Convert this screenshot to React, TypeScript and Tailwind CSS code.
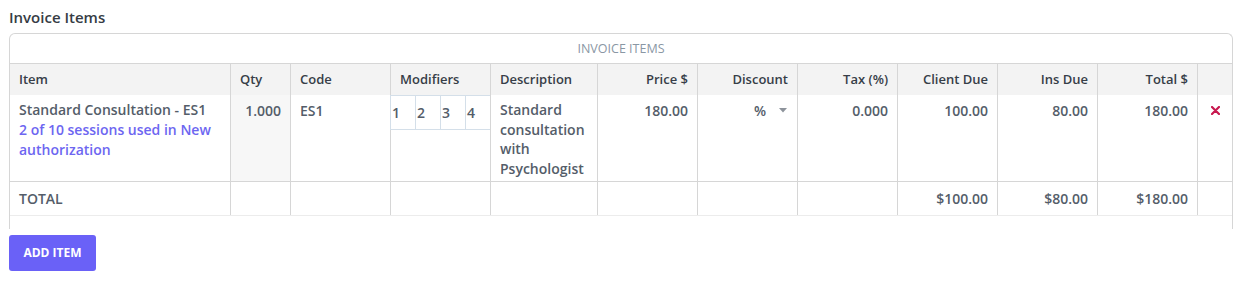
const cols =
  "grid grid-cols-[220px_60px_100px_100px_107px_100px_100px_100px_100px_100px_100px_1fr]";

const headers = [
  { label: "Item", align: "text-left" },
  { label: "Qty", align: "text-left" },
  { label: "Code", align: "text-left" },
  { label: "Modifiers", align: "text-left" },
  { label: "Description", align: "text-left" },
  { label: "Price $", align: "text-right" },
  { label: "Discount", align: "text-right" },
  { label: "Tax (%)", align: "text-right" },
  { label: "Client Due", align: "text-right" },
  { label: "Ins Due", align: "text-right" },
  { label: "Total $", align: "text-right" },
  { label: "", align: "text-left" },
];

function Caret() {
  return (
    <svg width="8" height="5" viewBox="0 0 8 5" className="ml-[13px]">
      <path d="M0 0 L8 0 L4 4.5 Z" fill="#8d939b" />
    </svg>
  );
}

function RemoveIcon() {
  return (
    <svg width="9" height="9" viewBox="0 0 9 9">
      <path d="M1 1 L8 8 M8 1 L1 8" stroke="#c8184f" strokeWidth="2.2" strokeLinecap="round" />
    </svg>
  );
}

export default function App() {
  return (
    <div className="w-[1248px] h-[291px] bg-white pl-[9px] pr-[15px] pt-[7px] font-['Open_Sans',sans-serif] text-[14px] leading-[19.5px] font-semibold text-[#545d69]">
      <h2 className="text-[15px] leading-[20px] font-semibold text-[#363c44]">Invoice Items</h2>

      <div className="mt-[6px] rounded-t-[6px] border-x border-t border-[#d6d6d6]">
        <div className="h-[30px] flex items-center justify-center text-[12.5px] font-normal uppercase text-[#8a97a4] border-b border-[#d6d6d6]">
          Invoice Items
        </div>

        <div className={`${cols} bg-[#f3f3f3] text-[13px] text-[#373e48]`}>
          {headers.map((h, i) => (
            <div
              key={i}
              className={`h-[31px] px-[9px] pt-[6px] ${h.align} ${i > 0 ? "border-l border-[#d6d6d6]" : ""}`}
            >
              {h.label}
            </div>
          ))}
        </div>

        <div className={`${cols} h-[86px]`}>
          <div className="px-[9px] pt-[5px] leading-[20px]">
            <div>Standard Consultation - ES1</div>
            <div className="text-[#6d66f1]">2 of 10 sessions used in New authorization</div>
          </div>
          <div className="border-l border-[#d6d6d6] bg-[#f7f7f7] px-[9px] pt-[6px] text-right">1.000</div>
          <div className="border-l border-[#d6d6d6] px-[9px] pt-[6px]">ES1</div>
          <div className="border-l border-[#d6d6d6]">
            <div className="flex h-[35px] w-[101px] -ml-px">
              {["1", "2", "3", "4"].map((m, i) => (
                <div
                  key={m}
                  className={`flex-1 h-[35px] border border-[#d4dfe9] pl-[1px] pt-[7px] ${i > 0 ? "-ml-px" : ""}`}
                >
                  {m}
                </div>
              ))}
            </div>
          </div>
          <div className="border-l border-[#d6d6d6] px-[9px] pt-[5px]">
            Standard consultation with Psychologist
          </div>
          <div className="border-l border-[#d6d6d6] px-[9px] pt-[6px] text-right">180.00</div>
          <div className="border-l border-[#d6d6d6] pr-[10px] pt-[6px] flex justify-end items-start">
            <span>%</span>
            <span className="h-[19px] flex items-center">
              <Caret />
            </span>
          </div>
          <div className="border-l border-[#d6d6d6] px-[9px] pt-[6px] text-right">0.000</div>
          <div className="border-l border-[#d6d6d6] px-[9px] pt-[6px] text-right">100.00</div>
          <div className="border-l border-[#d6d6d6] px-[9px] pt-[6px] text-right">80.00</div>
          <div className="border-l border-[#d6d6d6] px-[9px] pt-[6px] text-right">180.00</div>
          <div className="border-l border-[#d6d6d6] pl-[13px] pt-[11px]">
            <RemoveIcon />
          </div>
        </div>

        <div className={`${cols} h-[35px] border-t border-b border-t-[#d6d6d6] border-b-[#ececec]`}>
          <div className="px-[9px] pt-[7px]">TOTAL</div>
          <div className="border-l border-[#d6d6d6]" />
          <div className="border-l border-[#d6d6d6]" />
          <div className="border-l border-[#d6d6d6]" />
          <div className="border-l border-[#d6d6d6]" />
          <div className="border-l border-[#d6d6d6]" />
          <div className="border-l border-[#d6d6d6]" />
          <div className="border-l border-[#d6d6d6]" />
          <div className="border-l border-[#d6d6d6] px-[9px] pt-[7px] text-right">$100.00</div>
          <div className="border-l border-[#d6d6d6] px-[9px] pt-[7px] text-right">$80.00</div>
          <div className="border-l border-[#d6d6d6] px-[9px] pt-[7px] text-right">$180.00</div>
          <div className="border-l border-[#d6d6d6]" />
        </div>

        <div className="h-[13px]" />
      </div>

      <button className="mt-[6px] h-[36px] w-[87px] rounded-[3px] bg-[#6a61f7] text-[12px] font-bold text-white">
        ADD ITEM
      </button>
    </div>
  );
}
